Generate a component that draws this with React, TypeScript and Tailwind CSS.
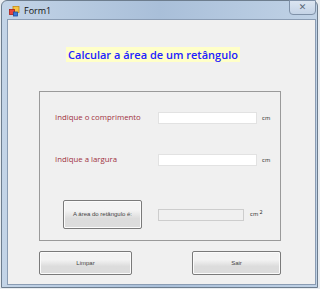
import React from "react";

function FormIcon() {
  return (
    <svg width="11" height="11" viewBox="0 0 11 11">
      <rect x="4" y="0.5" width="6" height="6" fill="#f5c542" stroke="#c98a10" strokeWidth="0.8" />
      <rect x="0.5" y="3.5" width="5" height="5" fill="#e8453c" stroke="#a82018" strokeWidth="0.8" />
      <rect x="4.5" y="6" width="4" height="4" fill="#3a78d8" stroke="#1f4c9a" strokeWidth="0.8" />
    </svg>
  );
}

function WinButton({ children, className }: { children: React.ReactNode; className: string }) {
  return (
    <div
      className={
        "flex items-center justify-center rounded-[2px] border border-[#7a7a7a] bg-gradient-to-b from-[#f3f3f3] from-35% to-[#dcdcdc] to-65% text-[6px] text-[#444] shadow-[inset_0_0_0_1px_#fbfbfb] " +
        className
      }
      style={{ fontFamily: '"Liberation Sans", Arial, sans-serif' }}
    >
      {children}
    </div>
  );
}

export default function App() {
  const ui = { fontFamily: '"Open Sans", "Noto Sans", sans-serif' };
  const small = { fontFamily: '"DejaVu Sans", sans-serif' };
  return (
    <div className="w-[320px] h-[289px] bg-[#e8ecf0] overflow-hidden">
      <div className="ml-[1px] w-[317px] h-[288px] rounded-t-[6px] border border-[#6d7d8e] bg-gradient-to-r from-[#c3d4e7] via-[#a9bfd9] to-[#c0d2e6] flex flex-col">
        {/* title bar */}
        <div className="h-[18px] flex items-center relative">
          <div className="ml-[7px] mt-[2px]">
            <FormIcon />
          </div>
          <span className="ml-[4px] mt-[1px] text-[9px] text-[#111]" style={ui}>
            Form1
          </span>
          <div className="absolute right-[1px] top-[-1px] w-[27px] h-[15px] rounded-b-[4px] border border-[#7f91a8] bg-gradient-to-b from-[#dbe5f1] to-[#c4d3e6] flex items-center justify-center">
            <span className="text-[9px] leading-none text-[#5a6677] font-bold" style={small}>
              ✕
            </span>
          </div>
        </div>
        {/* client area */}
        <div className="ml-[5px] w-[309px] h-[266px] border border-[#8a9cb3] bg-[#f0f0f0] flex flex-col" style={ui}>
          <div className="ml-[58px] mt-[27px] w-[174px] h-[15px] bg-[#ffffc8] flex items-center justify-center">
            <span className="text-[11px] font-semibold text-[#2222ff] leading-none whitespace-nowrap" style={ui}>
              Calcular a área de um retângulo
            </span>
          </div>
          {/* group box */}
          <div className="ml-[31px] mt-[29px] w-[242px] h-[150px] border border-[#9a9a9a] flex flex-col">
            <div className="mt-[20px] flex items-center h-[12px]">
              <span className="ml-[15px] w-[103px] text-[7.8px] text-[#a0303f] whitespace-nowrap">Indique o comprimento</span>
              <div className="w-[99px] h-[12px] bg-white border border-[#e2e2e2]" />
              <span className="ml-[5px] text-[5.5px] text-[#333]" style={small}>cm</span>
            </div>
            <div className="mt-[30px] flex items-center h-[12px]">
              <span className="ml-[15px] w-[103px] text-[7.8px] text-[#a0303f] whitespace-nowrap">Indique a largura</span>
              <div className="w-[99px] h-[12px] bg-white border border-[#e2e2e2]" />
              <span className="ml-[5px] text-[5.5px] text-[#333]" style={small}>cm</span>
            </div>
            <div className="mt-[34px] flex items-center">
              <WinButton className="ml-[23px] w-[79px] h-[29px]">A área do retângulo é:</WinButton>
              <div className="ml-[16px] w-[86px] h-[12px] bg-[#f0f0f0] border border-[#cdcdcd]" />
              <span className="ml-[6px] text-[5.5px] text-[#333]" style={small}>
                cm<sup className="text-[5px] ml-[1px]">2</sup>
              </span>
            </div>
          </div>
          <div className="mt-[10px] flex">
            <WinButton className="ml-[31px] w-[93px] h-[24px]">Limpar</WinButton>
            <WinButton className="ml-[60px] w-[89px] h-[24px]">Sair</WinButton>
          </div>
        </div>
      </div>
    </div>
  );
}
